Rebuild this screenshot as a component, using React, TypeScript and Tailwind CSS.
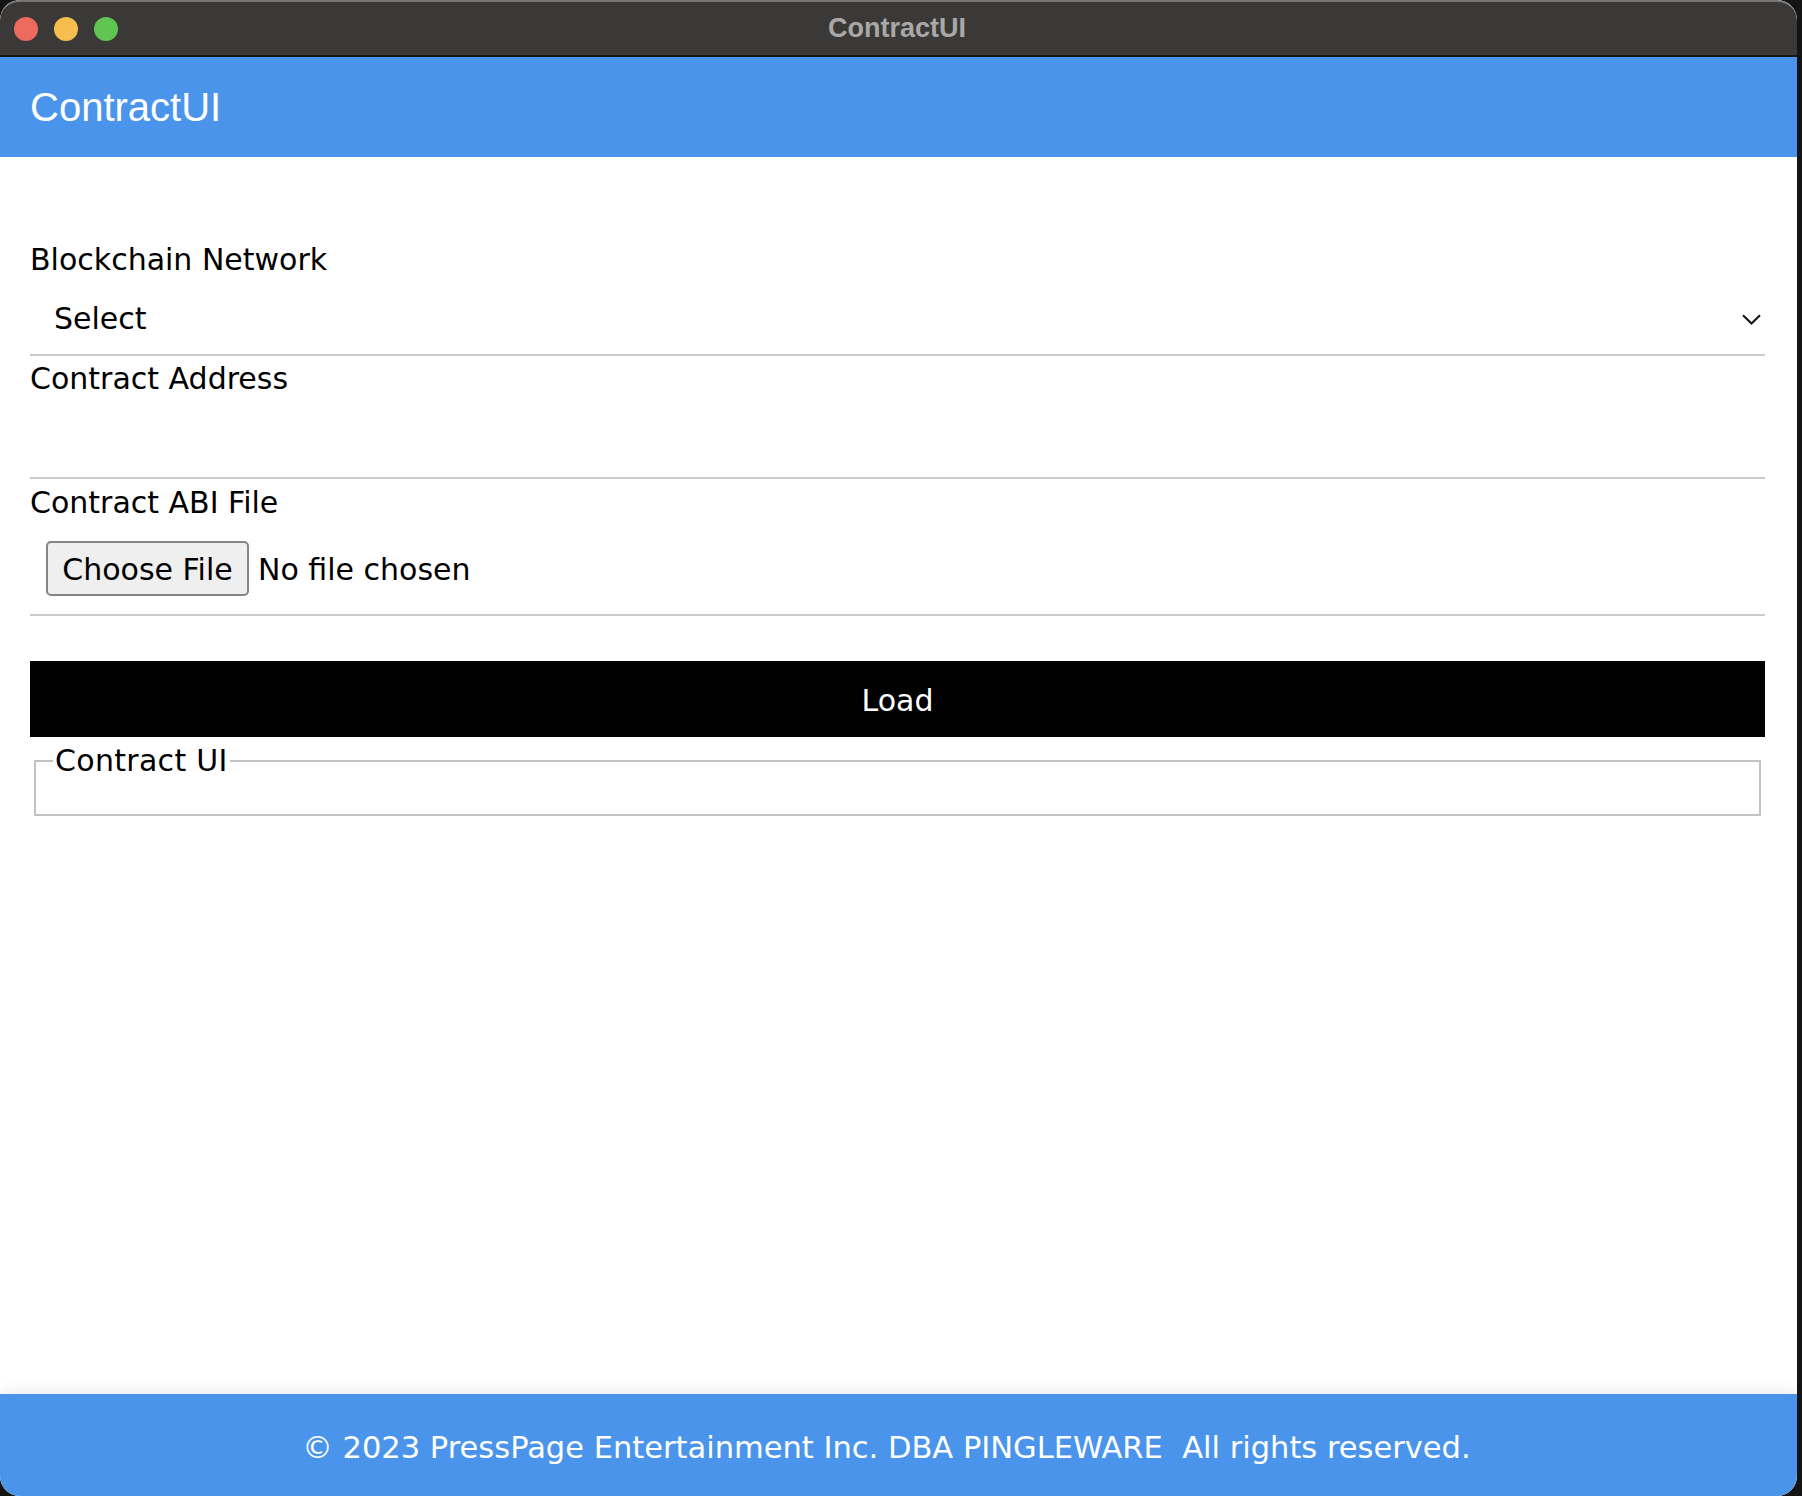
export default function App() {
  return (
    <div className="w-[1802px] h-[1496px] bg-[#141414] flex">
      <div className="w-[1797px] h-[1496px] rounded-[20px] overflow-hidden flex flex-col bg-white">
        {/* Title bar */}
        <div className="h-[57px] shrink-0 bg-[#3a3937] border-t-[2px] border-t-[#767573] border-b-[2px] border-b-[#161616] grid grid-cols-[1fr_auto_1fr] items-center rounded-t-[20px]">
          <div className="flex items-center gap-[16px] pl-[14px]">
            <span className="w-[24px] h-[24px] rounded-full bg-[#ee6a5f]" />
            <span className="w-[24px] h-[24px] rounded-full bg-[#f5be4f]" />
            <span className="w-[24px] h-[24px] rounded-full bg-[#61c554]" />
          </div>
          <div className="font-['Liberation_Sans',Arial,sans-serif] font-bold text-[27px] text-[#a9a8a7] leading-none pr-[3px]">
            ContractUI
          </div>
          <div />
        </div>

        {/* Header */}
        <div className="h-[100px] shrink-0 bg-[#4a95eb] flex items-center pl-[30px]">
          <span className="font-['Liberation_Sans',Arial,sans-serif] text-[40px] text-white leading-none">
            ContractUI
          </span>
        </div>

        {/* Main */}
        <div className="flex-1 pl-[30px] pr-[32px] pt-[85px] font-['DejaVu_Sans',sans-serif] text-[30px] text-black">
          {/* Blockchain network */}
          <div className="h-[36px] leading-[36px]">Blockchain Network</div>
          <div className="mt-[4px] h-[72px] flex items-center justify-between pl-[24px] pr-[4px] pt-[2px]">
            <span className="leading-[36px]">Select</span>
            <svg width="19" height="11" viewBox="0 0 19 11" fill="none">
              <path d="M1 1.2 L9.5 9.5 L18 1.2" stroke="#111" strokeWidth="2" />
            </svg>
          </div>
          <div className="h-[2px] bg-[#cbcbcb]" />

          {/* Contract address */}
          <div className="mt-[5px] h-[36px] leading-[36px]">Contract Address</div>
          <div className="h-[80px]" />
          <div className="h-[2px] bg-[#cbcbcb]" />

          {/* ABI file */}
          <div className="mt-[6px] h-[36px] leading-[36px]">Contract ABI File</div>
          <div className="mt-[20px] flex items-center pl-[16px]">
            <button className="h-[55px] w-[203px] rounded-[5px] border-2 border-[#858585] bg-[#efefef] text-[30px] leading-none text-black flex items-center justify-center pt-[2px]">
              Choose File
            </button>
            <span className="ml-[9px] leading-[36px] pt-[2px]">No file chosen</span>
          </div>
          <div className="mt-[18px] h-[2px] bg-[#cbcbcb]" />

          {/* Load */}
          <button className="mt-[45px] w-full h-[76px] bg-black text-white text-[30px] flex items-center justify-center pt-[2px]">
            Load
          </button>

          {/* Contract UI fieldset */}
          <fieldset className="mt-[6px] mx-[4px] border-2 border-[#c2c2c2] pl-[17px] pb-[35px]">
            <legend className="px-[2px] leading-[36px] tracking-[0.3px]">Contract UI</legend>
          </fieldset>
        </div>

        {/* Footer */}
        <div className="relative h-[102px] shrink-0 bg-[#4a95eb] flex items-center justify-center shadow-[0_-4px_12px_rgba(0,0,0,0.07)] rounded-b-[20px] pt-[6px]">
          <span className="font-['DejaVu_Sans',sans-serif] text-[30.5px] text-white whitespace-pre pr-[24px]">
            © 2023 PressPage Entertainment Inc. DBA PINGLEWARE  All rights reserved.
          </span>
        </div>
      </div>
    </div>
  );
}
